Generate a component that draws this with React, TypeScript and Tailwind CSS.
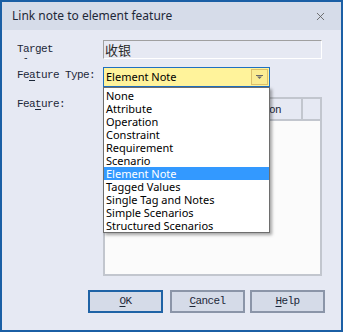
import { X } from "lucide-react";

const items = [
  "None",
  "Attribute",
  "Operation",
  "Constraint",
  "Requirement",
  "Scenario",
  "Element Note",
  "Tagged Values",
  "Single Tag and Notes",
  "Simple Scenarios",
  "Structured Scenarios",
];

const mono = "font-['Liberation_Mono',monospace] text-[11px] tracking-[-0.6px] text-[#1c2738]";
const ui = "font-['Noto_Sans',sans-serif]";

const DialogButton = ({ label, primary }: { label: string; primary?: boolean }) => (
  <button
    className={`w-[75px] h-[23px] border-2 bg-[#d5dbe8] ${mono} ${
      primary ? "border-[#1f63a6]" : "border-[#8b95a8]"
    }`}
  >
    <span className="underline underline-offset-2">{label[0]}</span>
    {label.slice(1)}
  </button>
);

export default function App() {
  return (
    <div className="relative w-[343px] h-[332px] border-2 border-[#1b5fa5] bg-[#e6e9f3] flex flex-col">
      {/* title bar */}
      <div className="h-[28px] bg-[#d6dce9] flex items-center justify-between pl-[10px] pr-[14px]">
        <span className={`${ui} text-[12px] text-[#1e2838]`}>Link note to element feature</span>
        <X size={13} strokeWidth={1.6} className="text-[#5f5f5f]" />
      </div>

      <div className="flex flex-col pl-[15px] pt-[10px]">
        <div className="flex h-[19px]">
          <div className={`w-[86px] h-[19px] overflow-hidden leading-[14px] pt-[2px] ${mono}`}>
            Target Element:
          </div>
          <div className="w-[219px] h-[19px] border-t border-l border-[#a0a0a0] border-b-white border-r-white border-b border-r flex items-center pl-[1px]">
            <span className="font-['Noto_Sans_CJK_SC',sans-serif] text-[13px] leading-none text-[#2a2a2a]">
              收银
            </span>
          </div>
        </div>

        <div className="flex items-center h-[20px] mt-[8px]">
          <div className={`w-[86px] leading-[13px] -mt-[3px] ${mono}`}>
            Fe<span className="underline underline-offset-2">a</span>ture Type:
          </div>
          <div className="w-[167px] h-[20px] border border-[#1e6fc0] bg-[#fff39b] flex items-center justify-between pl-[2px] pr-[1px]">
            <span className={`${ui} text-[11px] text-black`}>Element Note</span>
            <div className="w-[17px] h-[16px] border border-[#dcc06a] bg-[#fbec92] flex items-center justify-center">
              <svg width="7" height="5" viewBox="0 0 7 5">
                <rect x="0" y="0" width="7" height="1" fill="#6a6a6a" />
                <polygon points="1,1.5 6,1.5 3.5,4" fill="#6a6a6a" />
              </svg>
            </div>
          </div>
        </div>

        <div className="flex mt-[10px]">
          <div className={`w-[86px] leading-[13px] pt-[1px] ${mono}`}>
            Fea<span className="underline underline-offset-2">t</span>ure:
          </div>
          <div className="w-[219px] h-[179px] border-2 border-[#c2c6ce] bg-[#fbfbfb] flex flex-col">
            <div className="h-[22px] flex border-b-2 border-[#c2c6ce] bg-[#e6e9f3]">
              <div className="w-[105px] border-r-2 border-[#c2c6ce]" />
              <div className={`w-[93px] border-r-2 border-[#c2c6ce] flex items-center pl-[5px] pt-[2px] ${mono}`}>
                Description
              </div>
              <div className="flex-1" />
            </div>
          </div>
        </div>

        <div className="flex justify-end gap-[7px] mt-[14px] pr-[16px]">
          <DialogButton label="OK" primary />
          <div className="flex gap-[5px]">
            <DialogButton label="Cancel" />
            <DialogButton label="Help" />
          </div>
        </div>
      </div>

      {/* open dropdown list */}
      <div className="absolute left-[101px] top-[85px] w-[167px] h-[146px] border border-[#6e6e6e] bg-white pt-[1px] shadow-[2px_2px_3px_rgba(0,0,0,0.35)]">
        {items.map((it) => (
          <div
            key={it}
            className={`h-[13px] leading-[13px] pl-[2px] ${ui} text-[11px] ${
              it === "Element Note" ? "bg-[#3399ff] text-white" : "text-black"
            }`}
          >
            {it}
          </div>
        ))}
      </div>
    </div>
  );
}
